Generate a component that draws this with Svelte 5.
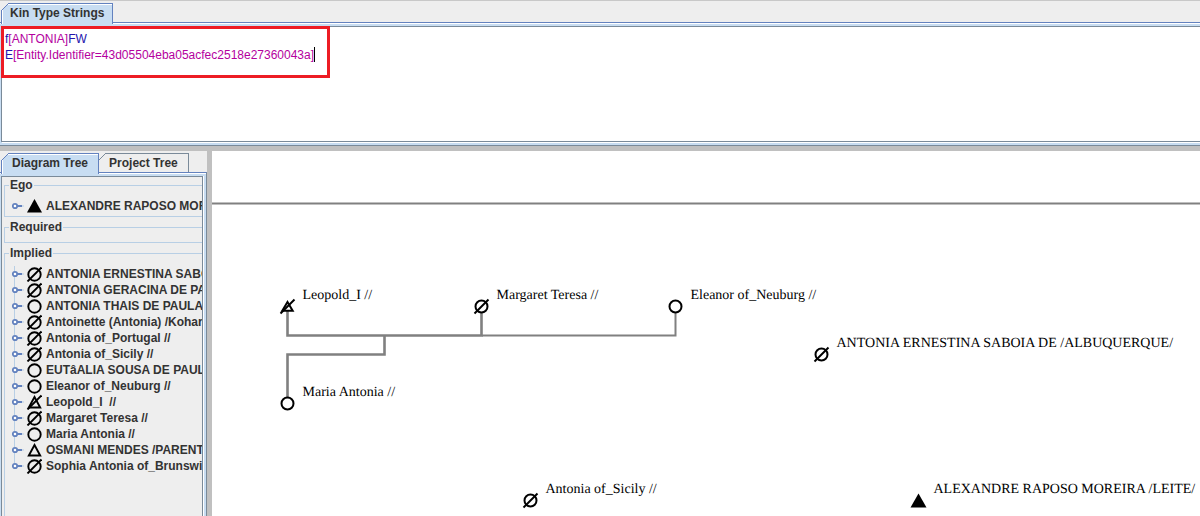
<script>
  let query = $state('f[ANTONIA]FW\nE[Entity.Identifier=43d05504eba05acfec2518e27360043a]');
  let activeTree = $state('diagram');

  const tokens = $derived(query.split(/(\[[^\]]*\]?)/).filter(Boolean));

  const ego = [{ name: 'ALEXANDRE RAPOSO MOREIRA /LEITE/', kind: 'filled' }];
  const implied = [
    { name: 'ANTONIA ERNESTINA SABOIA DE /ALBUQUERQUE/', kind: 'circle', slash: true },
    { name: 'ANTONIA GERACINA DE PAULA', kind: 'circle', slash: true },
    { name: 'ANTONIA THAIS DE PAULA P', kind: 'circle' },
    { name: 'Antoinette (Antonia) /Kohary/', kind: 'circle', slash: true },
    { name: 'Antonia of_Portugal //', kind: 'circle', slash: true },
    { name: 'Antonia of_Sicily //', kind: 'circle', slash: true },
    { name: 'EUTâALIA SOUSA DE PAULA', kind: 'circle' },
    { name: 'Eleanor of_Neuburg //', kind: 'circle' },
    { name: 'Leopold_I  //', kind: 'triangle', slash: true },
    { name: 'Margaret Teresa //', kind: 'circle', slash: true },
    { name: 'Maria Antonia //', kind: 'circle' },
    { name: 'OSMANI MENDES /PARENTE/', kind: 'triangle' },
    { name: 'Sophia Antonia of_Brunswick', kind: 'circle', slash: true }
  ];

  const nodes = [
    { x: 75.5, y: 155.5, name: 'Leopold_I //', kind: 'triangle', slash: true },
    { x: 269.5, y: 155.5, name: 'Margaret Teresa //', kind: 'circle', slash: true },
    { x: 463.5, y: 155.5, name: 'Eleanor of_Neuburg //', kind: 'circle' },
    { x: 609.5, y: 203.5, name: 'ANTONIA ERNESTINA SABOIA DE /ALBUQUERQUE/', kind: 'circle', slash: true },
    { x: 75.5, y: 252.5, name: 'Maria Antonia //', kind: 'circle' },
    { x: 318.5, y: 349.5, name: 'Antonia of_Sicily //', kind: 'circle', slash: true },
    { x: 706.5, y: 349.5, name: 'ALEXANDRE RAPOSO MOREIRA /LEITE/', kind: 'filled' }
  ];
</script>

{#snippet treeRow(person)}
  <li>
    <button class="handle" aria-label="Expand {person.name}">
      <svg width="12" height="8" viewBox="0 0 12 8" aria-hidden="true">
        <path d="M5 4H10" stroke="#6382bf" stroke-width="2" />
        <path d="M10 4H12" stroke="#b8cfe5" />
        <circle cx="3" cy="4" r="2.2" fill="#fff" stroke="#6382bf" stroke-width="1.8" />
      </svg>
    </button>
    <svg class="symbol" width="16" height="16" viewBox="0 0 16 16" aria-hidden="true">
      {#if person.kind === 'circle'}
        <circle cx="8.500" cy="8.500" r="6.2" fill="none" stroke="#000" stroke-width="1.9" />
      {:else if person.kind === 'triangle'}
        <path d="M8.500 3L14.200 13.500H2.800Z" fill="none" stroke="#000" stroke-width="1.9" />
      {:else}
        <path d="M8.500 1L16 14.500H1Z" />
      {/if}
      {#if person.slash}<path d="M1.500 15.500L15.500 1.500" stroke="#000" stroke-width="1.9" />{/if}
    </svg>
    <span>{person.name}</span>
  </li>
{/snippet}

{#snippet group(title, people)}
  <fieldset>
    <legend>{title}</legend>
    {#if people.length}
      <ul class:many={people.length > 1}>
        {#each people as person}{@render treeRow(person)}{/each}
      </ul>
    {/if}
  </fieldset>
{/snippet}

<main>
  <section class="query">
    <div class="tabs" role="tablist">
      <button class="tab active first" role="tab" aria-selected="true">Kin Type Strings</button>
    </div>
    <div class="frame">
      <div class="editor">
        <pre aria-hidden="true">{#each tokens as token}<span class:filter={token[0] === '['}>{token}</span>{/each}<i></i></pre>
        <textarea bind:value={query} aria-label="Kin Type Strings" spellcheck="false"></textarea>
        <div class="highlight"></div>
      </div>
    </div>
  </section>

  <div class="work">
    <aside>
      <div class="tabs" role="tablist">
        <button class="tab first" class:active={activeTree === 'diagram'} role="tab" aria-selected={activeTree === 'diagram'} onclick={() => (activeTree = 'diagram')}>Diagram Tree</button>
        <button class="tab" class:active={activeTree === 'project'} role="tab" aria-selected={activeTree === 'project'} onclick={() => (activeTree = 'project')}>Project Tree</button>
      </div>
      <div class="frame side">
        <div class="tree">
          {@render group('Ego', ego)}
          {@render group('Required', [])}
          {@render group('Implied', implied)}
        </div>
      </div>
    </aside>

    <div class="canvas">
      <svg class="diagram" width="100%" height="100%" role="img" aria-label="Kinship diagram">
        <path d="M0 52.500H3000" stroke="#808080" stroke-width="2" />
        <g fill="none" stroke="#808080">
          <path d="M463.500 156V184.500H270" stroke-width="2" />
          <path d="M75.500 156V184.500H269.500V156M172.500 184V203.500H75.500V252" stroke-width="2.6" />
        </g>
        {#each nodes as n}
          <g transform="translate({n.x} {n.y})">
            {#if n.kind === 'circle'}
              <circle r="6" fill="#fff" stroke="#000" stroke-width="2" />
            {:else if n.kind === 'triangle'}
              <path d="M0 -4.500L5.200 4.200H-5.200Z" fill="#fff" stroke="#000" stroke-width="2" />
            {:else}
              <path d="M0 -7L8 7H-8Z" />
            {/if}
            {#if n.slash}<path d="M-7 7L7 -7" stroke="#000" stroke-width="2" />{/if}
            <text x="15" y="-8">{n.name}</text>
          </g>
        {/each}
      </svg>
    </div>
  </div>
</main>

<style>
  :global(body) { margin: 0; background: #c0c0c0; }
  main {
    display: flex;
    flex-direction: column;
    height: 100vh;
    overflow: hidden;
    font: bold 12px/16px 'Liberation Sans', Arial, sans-serif;
    color: #333;
  }
  .query {
    box-sizing: border-box;
    display: flex;
    flex-direction: column;
    flex: 0 0 28.3%;
    background: #eee;
    border-top: 1px solid #c8c8c8;
  }
  .tabs { display: flex; padding: 2px 1px 0; height: 21px; box-sizing: border-box; }
  .tab {
    position: relative;
    box-sizing: border-box;
    height: 19px;
    margin: 0;
    padding: 0 10px;
    border: 1px solid #7a8a99;
    border-left: 0;
    border-bottom: 0;
    background: #eee;
    color: inherit;
    font: inherit;
    --edge: #7a8a99;
  }
  .query .tab { padding: 0 8px; }
  .tab.first { border-left: 1px solid var(--edge); }
  .tab.active {
    z-index: 1;
    height: 21px;
    padding-bottom: 2px;
    --edge: #6382bf;
    border-color: var(--edge);
    background: #c8ddf2;
    box-shadow: inset 1px 1px #fff;
  }
  .tab::before {
    content: '';
    position: absolute;
    top: -1px;
    left: -1px;
    width: 9px;
    height: 9px;
    background: linear-gradient(135deg, #eee 40%, var(--edge) 40% 49%, transparent 49%);
  }
  .frame {
    flex: 1;
    display: flex;
    min-height: 0;
    padding: 3px 0;
    border-top: 1px solid #6382bf;
    border-bottom: 1px solid #7a8a99;
    background: #c8ddf2;
    box-shadow: inset 0 1px #fff;
  }
  .editor {
    position: relative;
    flex: 1;
    margin-left: 1px;
    border: 1px solid #7a8a99;
    border-right: 0;
    background: #fff;
    box-shadow: 1px 1px #fff;
  }
  pre, textarea {
    box-sizing: border-box;
    width: 100%;
    margin: 0;
    padding: 4px 3px;
    font: 12px/16px 'Liberation Sans', Arial, sans-serif;
    white-space: pre-wrap;
  }
  pre { color: #2314ad; }
  .filter { color: #b4009e; }
  pre i { display: inline-block; height: 15px; border-left: 1px solid #000; vertical-align: top; }
  textarea {
    position: absolute;
    inset: 0;
    height: 100%;
    border: 0;
    outline: 0;
    resize: none;
    background: transparent;
    color: transparent;
    caret-color: #000;
  }
  .highlight {
    position: absolute;
    top: -1px;
    left: -1px;
    width: 323px;
    height: 46px;
    border: 3px solid #ed1c24;
    pointer-events: none;
  }
  .work { flex: 1; display: flex; gap: 5px; padding-top: 5px; min-height: 0; }
  aside { display: flex; flex-direction: column; flex: 0 0 207px; min-width: 0; background: #eee; }
  .frame.side { border-right: 1px solid #7a8a99; padding: 3px 3px 0 1px; border-bottom: 0; }
  .tree {
    flex: 1;
    min-width: 0;
    overflow: hidden;
    padding-left: 2px;
    border: 1px solid #7a8a99;
    border-bottom: 0;
    background: #eee;
    box-shadow: 1px 0 #fff;
  }
  fieldset {
    box-sizing: border-box;
    margin: 0 0 2px;
    padding: 0 0 2px;
    min-width: 0;
    min-height: 24px;
    border: 1px solid #b8cfe5;
    border-right: 0;
  }
  fieldset:last-child { min-height: 100%; }
  legend { margin-left: 4px; padding: 0 1px; }
  ul { margin: 5px 0 0; padding: 0 0 0 7px; list-style: none; }
  ul.many { background: linear-gradient(#b8cfe5, #b8cfe5) 9px 0 / 1px calc(100% - 8px) no-repeat; }
  li { display: flex; align-items: center; height: 16px; white-space: pre; }
  .handle { display: flex; flex: none; padding: 0; border: 0; background: none; }
  .symbol { flex: none; margin: 0 4px 0 2px; }
  .canvas { flex: 1; min-width: 0; overflow: hidden; background: #fff; }
  .diagram { display: block; }
  text { font: 14px 'Liberation Serif', 'Times New Roman', serif; text-rendering: geometricPrecision; fill: #000; }
</style>
